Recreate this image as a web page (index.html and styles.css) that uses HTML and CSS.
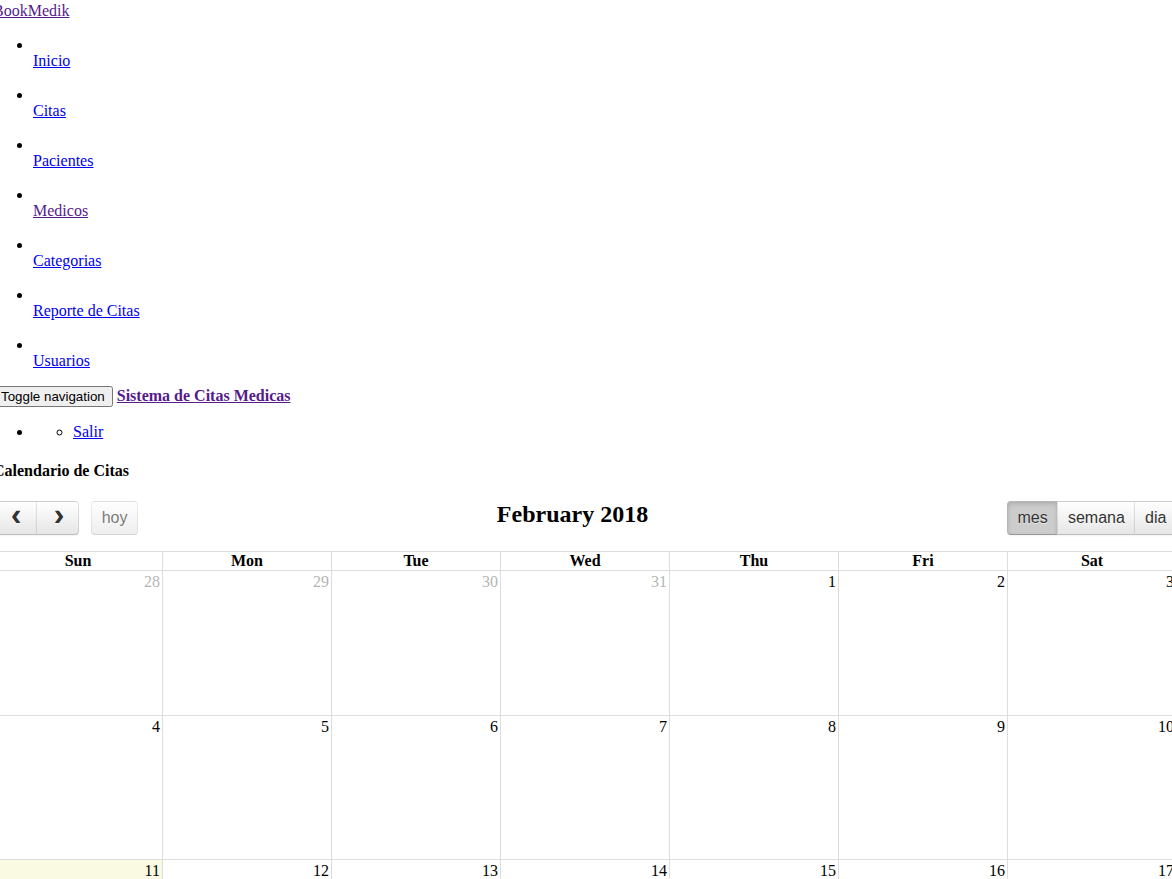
FILE: index.html
```html
<!DOCTYPE html>
<html lang="es">
<head>
<meta charset="utf-8">
<title>BookMedik</title>
<link rel="stylesheet" href="styles.css">
</head>
<body>
<div class="page">
  <div class="sidebar">
    <div class="logo"><a href="#" class="simple-text visited">BookMedik</a></div>
    <ul class="nav">
      <li class="nav-item"><i class="nav-icon"></i><p class="nav-label"><a href="#">Inicio</a></p></li>
      <li class="nav-item"><i class="nav-icon"></i><p class="nav-label"><a href="#">Citas</a></p></li>
      <li class="nav-item"><i class="nav-icon"></i><p class="nav-label"><a href="#">Pacientes</a></p></li>
      <li class="nav-item"><i class="nav-icon"></i><p class="nav-label"><a href="#" class="visited">Medicos</a></p></li>
      <li class="nav-item"><i class="nav-icon"></i><p class="nav-label"><a href="#">Categorias</a></p></li>
      <li class="nav-item"><i class="nav-icon"></i><p class="nav-label"><a href="#">Reporte de Citas</a></p></li>
      <li class="nav-item"><i class="nav-icon"></i><p class="nav-label"><a href="#">Usuarios</a></p></li>
    </ul>
  </div>
  <div class="main-panel">
    <nav class="navbar">
      <div class="navbar-header">
        <button type="button" class="navbar-toggle">Toggle navigation</button>
        <a class="navbar-brand visited" href="#"><b>Sistema de Citas Medicas</b></a>
      </div>
      <ul class="navbar-nav">
        <li class="dropdown">
          <ul class="dropdown-menu">
            <li><a href="#">Salir</a></li>
          </ul>
        </li>
      </ul>
    </nav>
    <div class="content">
      <h4 class="card-title">Calendario de Citas</h4>
      <div class="fc">
        <div class="fc-toolbar">
          <div class="fc-left">
            <div class="btn-group">
              <button type="button" class="fc-button corner-left"><span class="fc-icon fc-icon-left"></span></button>
              <button type="button" class="fc-button corner-right"><span class="fc-icon fc-icon-right"></span></button>
            </div>
            <button type="button" class="fc-button corner-left corner-right disabled">hoy</button>
          </div>
          <div class="fc-center"><h2 class="fc-title">February 2018</h2></div>
          <div class="fc-right">
            <div class="btn-group">
              <button type="button" class="fc-button corner-left active">mes</button>
              <button type="button" class="fc-button">semana</button>
              <button type="button" class="fc-button corner-right">dia</button>
            </div>
          </div>
        </div>
        <div class="month">
          <div class="dow">Sun</div><div class="dow">Mon</div><div class="dow">Tue</div><div class="dow">Wed</div><div class="dow">Thu</div><div class="dow">Fri</div><div class="dow">Sat</div>

          <div class="day other"><span class="num">28</span></div>
          <div class="day other"><span class="num">29</span></div>
          <div class="day other"><span class="num">30</span></div>
          <div class="day other"><span class="num">31</span></div>
          <div class="day"><span class="num">1</span></div>
          <div class="day"><span class="num">2</span></div>
          <div class="day"><span class="num">3</span></div>

          <div class="day"><span class="num">4</span></div>
          <div class="day"><span class="num">5</span></div>
          <div class="day"><span class="num">6</span></div>
          <div class="day"><span class="num">7</span></div>
          <div class="day"><span class="num">8</span></div>
          <div class="day"><span class="num">9</span></div>
          <div class="day"><span class="num">10</span></div>

          <div class="day today"><span class="num">11</span></div>
          <div class="day"><span class="num">12</span></div>
          <div class="day"><span class="num">13</span></div>
          <div class="day"><span class="num">14</span></div>
          <div class="day"><span class="num">15</span></div>
          <div class="day"><span class="num">16</span></div>
          <div class="day"><span class="num">17</span></div>

          <div class="day"><span class="num">18</span></div>
          <div class="day"><span class="num">19</span></div>
          <div class="day"><span class="num">20</span></div>
          <div class="day"><span class="num">21</span></div>
          <div class="day"><span class="num">22</span></div>
          <div class="day"><span class="num">23</span></div>
          <div class="day"><span class="num">24</span></div>

          <div class="day"><span class="num">25</span></div>
          <div class="day"><span class="num">26</span></div>
          <div class="day"><span class="num">27</span></div>
          <div class="day"><span class="num">28</span></div>
          <div class="day other"><span class="num">1</span></div>
          <div class="day other"><span class="num">2</span></div>
          <div class="day other"><span class="num">3</span></div>

          <div class="day other"><span class="num">4</span></div>
          <div class="day other"><span class="num">5</span></div>
          <div class="day other"><span class="num">6</span></div>
          <div class="day other"><span class="num">7</span></div>
          <div class="day other"><span class="num">8</span></div>
          <div class="day other"><span class="num">9</span></div>
          <div class="day other"><span class="num">10</span></div>
        </div>
      </div>
    </div>
  </div>
</div>
</body>
</html>
```

FILE: styles.css
```css
html {
  overflow: hidden;
}

body {
  margin: 0;
  font-family: "Liberation Serif", "Times New Roman", serif;
  font-size: 16px;
  color: #000;
  background: #fff;
}

a {
  color: #0000ee;
}

a.visited,
.visited a {
  color: #551a8b;
}

.page {
  width: 1184px;
  margin-left: -7px;
  padding-top: 1.5px;
}

/* sidebar */
.nav {
  margin: 16px 0;
  padding-left: 40px;
}

.nav-icon {
  display: inline-block;
  width: 0;
  height: 0;
}

.nav-label {
  margin: -2px 0 16px;
}

/* top navbar */
.navbar-toggle {
  font: 13.333px "Liberation Sans", Arial, sans-serif;
}

.navbar-nav {
  margin: 16px 0;
  padding-left: 40px;
}

.dropdown-menu {
  margin: 0;
  padding-left: 40px;
  list-style: circle;
}

/* content */
.card-title {
  margin: 21.28px 0;
  font-size: 16px;
  font-weight: bold;
}

/* calendar */
.fc-toolbar {
  display: flex;
  align-items: flex-start;
  margin-bottom: 16px;
}

.fc-left,
.fc-right {
  display: flex;
  gap: 12px;
}

.fc-center {
  flex: 1;
  text-align: center;
}

.fc-title {
  display: inline-block;
  margin: 0;
  font-size: 24px;
  font-weight: bold;
}

.btn-group {
  display: flex;
}

.btn-group > .fc-button + .fc-button {
  margin-left: -1px;
}

.fc-button {
  box-sizing: border-box;
  height: 33.6px;
  margin: 0;
  padding: 0 9.6px;
  font: 16px "Liberation Sans", Arial, sans-serif;
  white-space: nowrap;
  color: #333;
  border: 1px solid;
  border-color: rgba(0, 0, 0, 0.1) rgba(0, 0, 0, 0.1) rgba(0, 0, 0, 0.25);
  border-radius: 0;
  background-color: #f5f5f5;
  background-image: linear-gradient(to bottom, #fff, #e6e6e6);
  text-shadow: 0 1px 1px rgba(255, 255, 255, 0.75);
  box-shadow: inset 0 1px 0 rgba(255, 255, 255, 0.2), 0 1px 2px rgba(0, 0, 0, 0.05);
}

.fc-button.corner-left {
  border-top-left-radius: 4px;
  border-bottom-left-radius: 4px;
}

.fc-button.corner-right {
  border-top-right-radius: 4px;
  border-bottom-right-radius: 4px;
}

.fc-button.active {
  background-color: #ccc;
  background-image: none;
  box-shadow: inset 0 2px 4px rgba(0, 0, 0, 0.15), 0 1px 2px rgba(0, 0, 0, 0.05);
}

.fc-button.disabled {
  opacity: 0.65;
  box-shadow: none;
}

.fc-icon {
  display: inline-block;
  position: relative;
  top: -0.05em;
  width: 1em;
  height: 1em;
  margin: 0 0.2em;
  line-height: 1em;
  vertical-align: middle;
  text-align: center;
  overflow: hidden;
  font-family: "Liberation Mono", "Courier New", monospace;
}

.fc-icon::after {
  position: relative;
  top: -7%;
  font-weight: bold;
  font-size: 200%;
}

.fc-icon-left::after {
  content: "\2039";
}

.fc-icon-right::after {
  content: "\203A";
}

.month {
  display: grid;
  grid-template-columns: repeat(7, 169px);
  grid-template-rows: 19px 145px 144px 145px 144px 145px 144px;
  border-top: 1px solid #ddd;
  border-left: 1px solid #ddd;
}

.dow,
.day {
  box-sizing: border-box;
  border-right: 1px solid #ddd;
  border-bottom: 1px solid #ddd;
}

.dow {
  text-align: center;
  font-weight: bold;
}

.day {
  text-align: right;
  padding: 2px 2px 0;
}

.day.today {
  background: #fafae3;
}

.day.other .num {
  opacity: 0.3;
}
```
